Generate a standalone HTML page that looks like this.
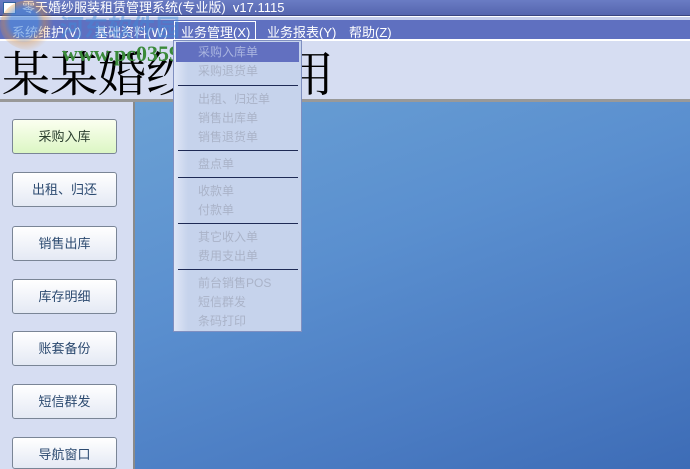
<!DOCTYPE html>
<html><head><meta charset="utf-8"><style>
*{margin:0;padding:0;box-sizing:border-box}
html,body{width:690px;height:469px;overflow:hidden}
body{position:relative;background:#d6ddf2;font-family:"Liberation Sans","Noto Sans CJK SC",sans-serif}
.abs{position:absolute}
#title{left:0;top:0;width:690px;height:16px;background:linear-gradient(#6a7cc4,#5565ae);color:#fff;font-size:13px;line-height:15px;padding-left:22px;border-bottom:1px solid #3a4580}
#strip{left:0;top:16px;width:690px;height:4px;background:#c4cdea;border-top:1px solid #fff}
#menu{left:0;top:20px;width:690px;height:21px;background:#5f70c0;border-bottom:2px solid #fff;color:#fff;font-size:13px}
#menu span{position:absolute;top:2px}
#hdr{left:0;top:42px;width:690px;height:57px;background:#d6ddf2;font-size:48px;line-height:57px;color:#000;font-family:"Noto Serif CJK SC","Liberation Serif",serif;overflow:hidden}
#line{left:0;top:99px;width:690px;height:3px;background:#999}
#left{left:0;top:102px;width:135px;height:367px;background:#d6ddf2;border-right:2px solid #8a8a8a;overflow:hidden}
#content{left:135px;top:102px;width:555px;height:367px;background:linear-gradient(160deg,#6aa0d4 0%,#5a8fcf 40%,#4a7bc2 75%,#3d6cb6 100%);overflow:hidden}
.btn{position:absolute;left:12px;width:105px;height:35px;border:1px solid #7a8596;border-radius:3px;background:linear-gradient(#fff,#e4e9f4);color:#2c4a70;font-size:13px;text-align:center;line-height:33px}
.btn.g{background:linear-gradient(#fbfff0,#dcf6c4);color:#2c4030}
#dd{left:173px;top:40px;width:129px;height:292px;border:1px solid #7f8fc0;background:linear-gradient(90deg,#dfe6f6 0,#c6d3ec 14px,#c6d3ec);}
.it{position:absolute;left:24px;font-size:12px;color:#aab3c8;line-height:19px}
.sep{position:absolute;left:4px;width:120px;height:1px;background:#1e2a55}
</style></head><body>
<div id="title" class="abs">零天婚纱服装租赁管理系统(专业版)&nbsp; v17.1115</div>
<div class="abs" style="left:3px;top:2px;width:13px;height:12px;background:#fff;border:1px solid #3060a0"></div>
<div id="strip" class="abs"></div>
<div id="menu" class="abs">
<span style="left:12px">系统维护(V)</span>
<span style="left:95px">基础资料(W)</span>
<span style="left:174px;top:1px;border:1px solid #fff;padding:0 5px 0 6px">业务管理(X)</span>
<span style="left:267px">业务报表(Y)</span>
<span style="left:349px">帮助(Z)</span>
</div>
<div id="hdr" class="abs"><span class="abs" style="left:2px;top:0">某某婚纱</span><span class="abs" style="left:286px;top:0">用</span></div>
<div class="abs" style="left:0;top:0;width:60px;height:50px;border-radius:50%;background:radial-gradient(circle at 40% 45%,rgba(80,140,220,.6) 30%,rgba(230,150,60,.35) 45%,transparent 65%)"></div>
<div class="abs" style="left:60px;top:16px;font-size:24px;line-height:26px;font-weight:bold;color:rgba(60,140,220,.45)">河东软件园</div>
<div class="abs" style="left:62px;top:42px;font-size:22px;line-height:24px;font-weight:bold;color:#3a8a3a;font-family:'Liberation Serif',serif">www.pc0359.cn</div>
<div id="line" class="abs"></div>
<div id="left" class="abs">
<div class="btn g" style="top:17px">采购入库</div>
<div class="btn" style="top:70px">出租、归还</div>
<div class="btn" style="top:124px">销售出库</div>
<div class="btn" style="top:177px">库存明细</div>
<div class="btn" style="top:229px">账套备份</div>
<div class="btn" style="top:282px">短信群发</div>
<div class="btn" style="top:335px;height:32px">导航窗口</div>
</div>
<div id="content" class="abs"></div>
<div id="dd" class="abs">
<div class="abs" style="left:2px;top:1px;width:123px;height:20px;background:#6270c0"></div>
<div class="it" style="top:2px;color:#aab5e0">采购入库单</div>
<div class="it" style="top:21px">采购退货单</div>
<div class="sep" style="top:44px"></div>
<div class="it" style="top:49px">出租、归还单</div>
<div class="it" style="top:68px">销售出库单</div>
<div class="it" style="top:87px">销售退货单</div>
<div class="sep" style="top:109px"></div>
<div class="it" style="top:114px">盘点单</div>
<div class="sep" style="top:136px"></div>
<div class="it" style="top:141px">收款单</div>
<div class="it" style="top:160px">付款单</div>
<div class="sep" style="top:182px"></div>
<div class="it" style="top:187px">其它收入单</div>
<div class="it" style="top:206px">费用支出单</div>
<div class="sep" style="top:228px"></div>
<div class="it" style="top:233px">前台销售POS</div>
<div class="it" style="top:252px">短信群发</div>
<div class="it" style="top:271px">条码打印</div>
</div>
</body></html>
